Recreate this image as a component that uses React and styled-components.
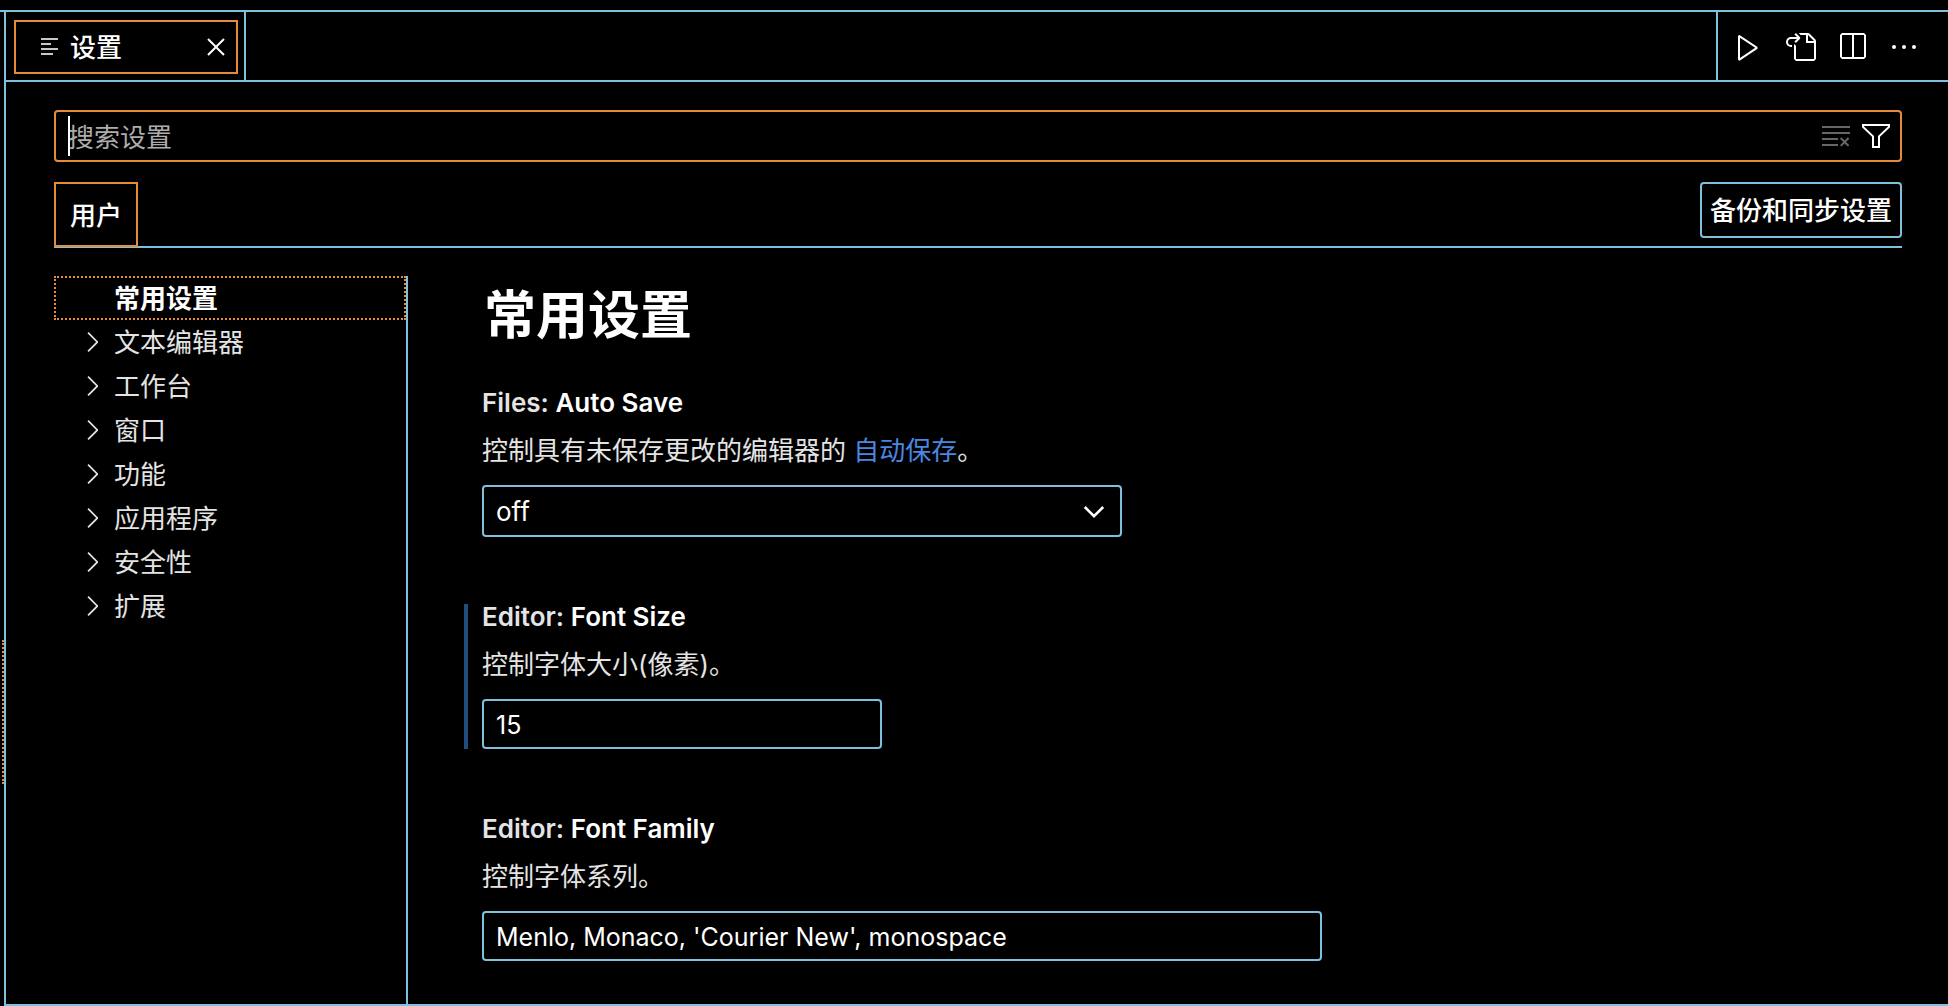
import React from "react";
import styled, { createGlobalStyle, css } from "styled-components";
import {
  VscChevronRight,
  VscClearAll,
  VscClose,
  VscEllipsis,
  VscFilter,
  VscGoToFile,
  VscPlay,
  VscSplitHorizontal,
} from "react-icons/vsc";

const color = {
  bg: "#000000",
  line: "#7fc0dc",
  focus: "#e58b39",
  text: "#ffffff",
  soft: "#e4e4e4",
  hint: "#adadad",
  link: "#4a87e2",
  modified: "#1f4e7f",
};

const GlobalStyle = createGlobalStyle`
  * { box-sizing: border-box; }
  body {
    margin: 0;
    background: ${color.bg};
    color: ${color.text};
    font-family: Inter, "Noto Sans CJK SC", sans-serif;
    font-size: 26px;
    line-height: 36px;
  }
  button, input, select { font: inherit; color: inherit; }
  h1, h2, p, ul { margin: 0; padding: 0; }
`;

const Shell = styled.div`
  display: flex;
  flex-direction: column;
  height: 100vh;
  padding-top: 10px;
`;

const Workbench = styled.div`
  display: flex;
  flex: 1;
  min-height: 0;
  border-top: 2px solid ${color.line};
`;

const Sash = styled.div`
  width: 4px;
  padding-top: 628px;
`;

const SashFocus = styled.div`
  height: 144px;
  border-right: 2px dotted ${color.focus};
`;

const Editor = styled.div`
  display: flex;
  flex: 1;
  flex-direction: column;
  min-width: 0;
  border-left: 2px solid ${color.line};
  border-bottom: 2px solid ${color.line};
`;

const TabBar = styled.header`
  display: flex;
  justify-content: space-between;
  height: 70px;
  flex-shrink: 0;
  border-bottom: 2px solid ${color.line};
`;

const TabCell = styled.div`
  display: flex;
  width: 240px;
  padding: 8px 6px 6px 8px;
  border-right: 2px solid ${color.line};
`;

const Tab = styled.div`
  display: flex;
  flex: 1;
  align-items: center;
  gap: 4px;
  padding: 0 4px 0 18px;
  border: 2px solid ${color.focus};
`;

const TabTitle = styled.span`
  flex: 1;
  padding-top: 2px;
  font-weight: 500;
`;

const IconButton = styled.button`
  display: grid;
  place-items: center;
  width: 32px;
  height: 32px;
  padding: 0;
  border: 0;
  background: none;
  font-size: 32px;
  opacity: ${(p) => (p.disabled ? 0.4 : 1)};
`;

const Actions = styled.div`
  display: flex;
  align-items: center;
  gap: 20px;
  padding: 2px 28px 0 14px;
  border-left: 2px solid ${color.line};
`;

const Settings = styled.main`
  display: flex;
  flex: 1;
  flex-direction: column;
  min-height: 0;
  padding: 28px 46px 0 48px;
`;

const SearchBox = styled.div`
  position: relative;
  display: flex;
  align-items: center;
  gap: 8px;
  height: 52px;
  padding: 0 8px 0 12px;
  border: 2px solid ${color.focus};
  border-radius: 4px;
`;

const SearchInput = styled.input`
  flex: 1;
  min-width: 0;
  height: 40px;
  padding: 2px 0 0;
  border: 0;
  outline: 0;
  background: none;
  &::placeholder { color: ${color.hint}; opacity: 1; }
`;

const Caret = styled.span`
  position: absolute;
  left: 12px;
  top: 4px;
  width: 2px;
  height: 40px;
  background: ${color.text};
`;

const ScopeBar = styled.div`
  display: flex;
  justify-content: space-between;
  align-items: flex-start;
  height: 66px;
  margin-top: 20px;
  border-bottom: 2px solid ${color.line};
`;

const ScopeTab = styled.button`
  height: 65px;
  padding: 2px 14px 0;
  border: 2px solid ${color.focus};
  background: ${color.bg};
  font-weight: 500;
`;

const SyncButton = styled.button`
  height: 56px;
  padding: 2px 8px 0;
  border: 2px solid ${color.line};
  border-radius: 4px;
  background: none;
  font-weight: 500;
`;

const Body = styled.div`
  display: flex;
  flex: 1;
  min-height: 0;
  margin-top: 28px;
`;

const Toc = styled.nav`
  width: 354px;
  flex-shrink: 0;
  border-right: 2px solid ${color.line};
`;

const TocList = styled.ul`
  list-style: none;
`;

const TocRow = styled.button`
  display: flex;
  align-items: center;
  gap: 6px;
  width: 100%;
  height: 44px;
  padding: 0 20px;
  border: 2px dotted transparent;
  background: none;
  color: ${color.soft};
  text-align: left;
  ${(p) =>
    p.$selected &&
    css`
      border-color: ${color.focus};
      color: ${color.text};
      font-weight: 700;
    `}
`;

const TocName = styled.span`
  padding-top: 2px;
`;

const Twistie = styled.span`
  display: grid;
  width: 32px;
  height: 32px;
  font-size: 32px;
`;

const Panel = styled.section`
  flex: 1;
  min-width: 0;
  padding-left: 56px;
  overflow: hidden;
`;

const Title = styled.h1`
  height: 76px;
  margin-bottom: 38px;
  padding-left: 20px;
  font-size: 52px;
  font-weight: 700;
  line-height: 80px;
`;

const Item = styled.div`
  display: flex;
  flex-direction: column;
  align-items: flex-start;
  margin-bottom: 67px;
  padding-left: 14px;
  border-left: 4px solid ${(p) => (p.$modified ? color.modified : "transparent")};
`;

const ItemLabel = styled.label`
  height: 26px;
  line-height: 26px;
  font-weight: 600;
`;

const Category = styled.span`
  color: ${color.soft};
`;

const Description = styled.p`
  height: 36px;
  margin: 17px 0 16px;
  color: ${color.soft};
`;

const Link = styled.a`
  color: ${color.link};
  text-decoration: none;
`;

const fieldStyle = css`
  padding: 2px 12px 0;
  border: 2px solid ${color.line};
  border-radius: 4px;
  outline: 0;
  background: ${color.bg};
`;

const Field = styled.input`
  ${fieldStyle}
  width: ${(p) => (p.$wide ? "840px" : "400px")};
  max-width: 100%;
  height: 50px;
  font-size: 25px;
`;

const SelectWrap = styled.div`
  position: relative;
  width: 640px;
  max-width: 100%;
`;

const Select = styled.select`
  ${fieldStyle}
  display: block;
  width: 100%;
  height: 52px;
  appearance: none;
`;

const SelectArrow = styled.span`
  position: absolute;
  right: 12px;
  top: 10px;
  display: grid;
  pointer-events: none;
`;

const SettingsFileIcon = () => (
  <svg width="32" height="32" viewBox="0 0 32 32" stroke="#c8c8c8" strokeWidth="2" aria-hidden="true">
    <path d="M7 8h17M7 13h10M7 18h17M7 23h12" />
  </svg>
);

const ArrowIcon = () => (
  <svg width="32" height="32" viewBox="0 0 32 32" fill="none" stroke="#fff" strokeWidth="2.6" aria-hidden="true">
    <path d="M6.8 12l9.2 9.2L25.2 12" />
  </svg>
);

const sections = ["文本编辑器", "工作台", "窗口", "功能", "应用程序", "安全性", "扩展"];

function Setting({ id, category, name, description, modified, children }) {
  return (
    <Item $modified={modified}>
      <ItemLabel htmlFor={id}>
        <Category>{category}: </Category>
        {name}
      </ItemLabel>
      <Description>{description}</Description>
      {children}
    </Item>
  );
}

export default function App() {
  return (
    <>
      <GlobalStyle />
      <Shell>
        <Workbench>
          <Sash>
            <SashFocus />
          </Sash>
          <Editor>
            <TabBar>
              <TabCell>
                <Tab>
                  <SettingsFileIcon />
                  <TabTitle>设置</TabTitle>
                  <IconButton aria-label="关闭"><VscClose /></IconButton>
                </Tab>
              </TabCell>
              <Actions>
                <IconButton aria-label="运行"><VscPlay /></IconButton>
                <IconButton aria-label="打开设置文件"><VscGoToFile /></IconButton>
                <IconButton aria-label="拆分编辑器"><VscSplitHorizontal /></IconButton>
                <IconButton aria-label="更多操作"><VscEllipsis /></IconButton>
              </Actions>
            </TabBar>
            <Settings>
              <SearchBox>
                <SearchInput aria-label="搜索设置" placeholder="搜索设置" />
                <Caret />
                <IconButton aria-label="清除搜索" disabled><VscClearAll /></IconButton>
                <IconButton aria-label="筛选"><VscFilter /></IconButton>
              </SearchBox>
              <ScopeBar>
                <ScopeTab>用户</ScopeTab>
                <SyncButton>备份和同步设置</SyncButton>
              </ScopeBar>
              <Body>
                <Toc>
                  <TocList>
                    <li>
                      <TocRow $selected>
                        <Twistie />
                        <TocName>常用设置</TocName>
                      </TocRow>
                    </li>
                    {sections.map((name) => (
                      <li key={name}>
                        <TocRow>
                          <Twistie><VscChevronRight /></Twistie>
                          <TocName>{name}</TocName>
                        </TocRow>
                      </li>
                    ))}
                  </TocList>
                </Toc>
                <Panel>
                  <Title>常用设置</Title>
                  <Setting
                    id="auto-save"
                    category="Files"
                    name="Auto Save"
                    description={<>控制具有未保存更改的编辑器的 <Link href="#auto-save">自动保存</Link>。</>}
                  >
                    <SelectWrap>
                      <Select id="auto-save" defaultValue="off">
                        <option value="off">off</option>
                      </Select>
                      <SelectArrow><ArrowIcon /></SelectArrow>
                    </SelectWrap>
                  </Setting>
                  <Setting
                    id="font-size"
                    category="Editor"
                    name="Font Size"
                    description="控制字体大小(像素)。"
                    modified
                  >
                    <Field id="font-size" defaultValue="15" />
                  </Setting>
                  <Setting id="font-family" category="Editor" name="Font Family" description="控制字体系列。">
                    <Field id="font-family" $wide defaultValue="Menlo, Monaco, 'Courier New', monospace" />
                  </Setting>
                </Panel>
              </Body>
            </Settings>
          </Editor>
        </Workbench>
      </Shell>
    </>
  );
}
